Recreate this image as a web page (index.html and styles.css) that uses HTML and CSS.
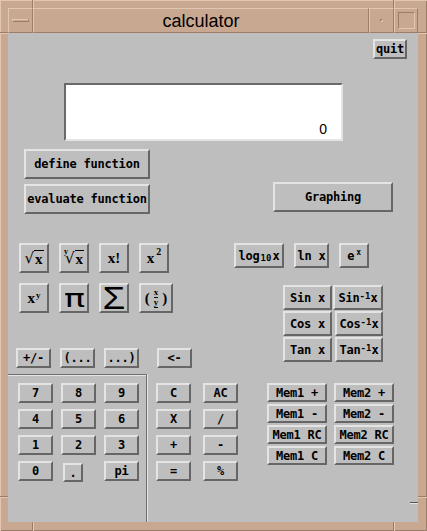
FILE: index.html
```html
<!DOCTYPE html>
<html lang="en">
<head>
    <meta charset="UTF-8">
    <title>calculator</title>
    <link rel="stylesheet" href="styles.css">
</head>
<body>
    <div class="window">
        <div class="titlebar">
            <div class="tb-box tb-menu"><span class="menu-bar"></span></div>
            <div class="tb-box tb-title">calculator</div>
            <div class="tb-box tb-min"><span class="min-dot"></span></div>
            <div class="tb-box tb-max"><span class="max-square"></span></div>
        </div>

        <div class="content">
            <div class="top-row">
                <button class="btn quit">quit</button>
            </div>

            <div class="display">0</div>

            <div class="fn-row">
                <div class="fn-col">
                    <button class="btn wide">define function</button>
                    <button class="btn wide">evaluate function</button>
                </div>
                <button class="btn graph">Graphing</button>
            </div>

            <div class="middle">
                <div class="middle-left">
                    <div class="math-grid">
                        <button class="btn sq serif"><span class="rad">√</span><span class="rad-x">x</span></button>
                        <button class="btn sq serif"><span class="idx">y</span><span class="rad">√</span><span class="rad-x">x</span></button>
                        <button class="btn sq serif">x!</button>
                        <button class="btn sq serif">x<span class="sup-high">2</span></button>
                        <button class="btn sq serif">x<span class="sup-y">y</span></button>
                        <button class="btn sq"><span class="pi">π</span></button>
                        <button class="btn sq"><span class="sigma">Σ</span></button>
                        <button class="btn sq sq-wide serif">(<span class="stack"><span class="stack-x">x</span><span class="stack-y">y</span></span>)</button>
                    </div>
                    <div class="paren-row">
                        <button class="btn small">+/-</button>
                        <button class="btn small">(...</button>
                        <button class="btn small">...)</button>
                        <button class="btn small back">&lt;-</button>
                    </div>
                </div>

                <div class="middle-right">
                    <div class="log-row">
                        <button class="btn log">log<span class="sub">10</span>x</button>
                        <button class="btn ln">ln x</button>
                        <button class="btn exp">e<span class="sup-x">x</span></button>
                    </div>
                    <div class="trig">
                        <button class="btn trig-btn">Sin x</button>
                        <button class="btn trig-btn">Sin<span class="sup-inv">-1</span>x</button>
                        <button class="btn trig-btn">Cos x</button>
                        <button class="btn trig-btn shift">Cos<span class="sup-inv">-1</span>x</button>
                        <button class="btn trig-btn">Tan x</button>
                        <button class="btn trig-btn shift">Tan<span class="sup-inv">-1</span>x</button>
                    </div>
                </div>
            </div>

            <div class="lower">
                <div class="keypad">
                    <div class="digits">
                        <button class="btn key">7</button>
                        <button class="btn key">8</button>
                        <button class="btn key">9</button>
                        <button class="btn key">4</button>
                        <button class="btn key">5</button>
                        <button class="btn key">6</button>
                        <button class="btn key">1</button>
                        <button class="btn key">2</button>
                        <button class="btn key">3</button>
                        <button class="btn key">0</button>
                        <button class="btn dot">.</button>
                        <button class="btn key">pi</button>
                    </div>
                </div>

                <div class="ops">
                    <button class="btn key">C</button>
                    <button class="btn key">AC</button>
                    <button class="btn key">X</button>
                    <button class="btn key">/</button>
                    <button class="btn key">+</button>
                    <button class="btn key">-</button>
                    <button class="btn key">=</button>
                    <button class="btn key">%</button>
                </div>

                <div class="memory">
                    <button class="btn mem">Mem1 +</button>
                    <button class="btn mem">Mem2 +</button>
                    <button class="btn mem">Mem1 -</button>
                    <button class="btn mem">Mem2 -</button>
                    <button class="btn mem">Mem1 RC</button>
                    <button class="btn mem">Mem2 RC</button>
                    <button class="btn mem">Mem1 C</button>
                    <button class="btn mem">Mem2 C</button>
                </div>
            </div>

            <span class="tick"></span>
        </div>

        <!-- frame grooves -->
        <span class="groove-v g-tl"></span>
        <span class="groove-v g-tr"></span>
        <span class="groove-v g-bl"></span>
        <span class="groove-v g-br"></span>
        <span class="groove-h g-lt"></span>
        <span class="groove-h g-rt"></span>
        <span class="groove-h g-lb"></span>
        <span class="groove-h g-rb"></span>
    </div>
</body>
</html>
```

FILE: styles.css
```css
* {
    box-sizing: border-box;
}

body {
    margin: 0;
    background-color: #c9a891;
}

.window {
    position: relative;
    width: 427px;
    height: 531px;
    padding: 8px 9px 9px 8px;
    display: flex;
    flex-direction: column;
    background-color: #c9a891;
    box-shadow: inset 1px 1px #e2c6b1, inset -1px -1px #9c7d67;
}

/* title bar */
.titlebar {
    display: flex;
    height: 25px;
}

.tb-box {
    display: flex;
    align-items: center;
    justify-content: center;
    border: 1px solid;
    border-color: #e2c6b1 #9c7d67 #9c7d67 #e2c6b1;
}

.tb-menu {
    width: 25px;
}

.tb-title {
    flex: 1;
    font-family: "Liberation Sans", Arial, sans-serif;
    font-size: 18px;
    color: #000;
    padding-top: 1px;
}

.tb-min {
    width: 25px;
}

.tb-max {
    width: 24px;
}

.menu-bar {
    width: 17px;
    height: 3px;
    border-top: 1px solid #e2c6b1;
    border-bottom: 1px solid #9c7d67;
    border-left: 1px solid #e2c6b1;
    border-right: 1px solid #9c7d67;
}

.min-dot {
    width: 3px;
    height: 3px;
    border-top: 1px solid #9c7d67;
    border-left: 1px solid #9c7d67;
    border-right: 1px solid #e2c6b1;
    border-bottom: 1px solid #e2c6b1;
}

.max-square {
    width: 17px;
    height: 17px;
    border: 1px solid;
    border-color: #9c7d67 #e2c6b1 #e2c6b1 #9c7d67;
}

/* frame grooves */
.groove-v {
    position: absolute;
    width: 2px;
    border-left: 1px solid #9c7d67;
    border-right: 1px solid #e2c6b1;
}

.groove-h {
    position: absolute;
    height: 2px;
    border-top: 1px solid #9c7d67;
    border-bottom: 1px solid #e2c6b1;
}

.g-tl { left: 32px; top: 0; height: 8px; }
.g-tr { left: 393px; top: 0; height: 8px; }
.g-bl { left: 32px; bottom: 0; height: 9px; }
.g-br { left: 393px; bottom: 0; height: 9px; }
.g-lt { left: 0; top: 32px; width: 8px; }
.g-rt { right: 0; top: 32px; width: 9px; }
.g-lb { left: 0; top: 496px; width: 8px; }
.g-rb { right: 0; top: 496px; width: 9px; }

/* main area */
.content {
    position: relative;
    flex: 1;
    display: flex;
    flex-direction: column;
    background-color: #bebebe;
}

.btn {
    display: inline-flex;
    align-items: center;
    justify-content: center;
    padding: 0;
    margin: 0;
    background-color: #bebebe;
    color: #000;
    border: 2px solid;
    border-color: #e4e4e4 #666 #666 #e4e4e4;
    font-family: "DejaVu Sans Mono", monospace;
    font-weight: bold;
    font-size: 12px;
    letter-spacing: -0.2px;
    white-space: pre;
    line-height: 1;
}

.top-row {
    display: flex;
    justify-content: flex-end;
    padding: 6px 11px 0 0;
}

.quit {
    width: 34px;
    height: 20px;
}

.display {
    width: 279px;
    height: 58px;
    margin: 24px 0 0 56px;
    display: flex;
    align-items: flex-end;
    justify-content: flex-end;
    padding: 0 14px 3px 0;
    background-color: #fff;
    border: 2px solid;
    border-color: #6a6a6a #e4e4e4 #e4e4e4 #6a6a6a;
    font-family: "Liberation Sans", Arial, sans-serif;
    font-size: 14px;
    line-height: 14px;
}

.fn-row {
    display: flex;
    align-items: flex-start;
    margin-top: 8px;
    padding-left: 16px;
}

.fn-col {
    display: flex;
    flex-direction: column;
    gap: 5px;
}

.wide {
    width: 126px;
    height: 30px;
}

.graph {
    width: 120px;
    height: 30px;
    margin: 33px 0 0 123px;
}

.middle {
    display: flex;
    margin-top: 29px;
    padding-left: 8px;
}

.middle-left {
    width: 218px;
}

.math-grid {
    display: grid;
    grid-template-columns: 30px 30px 30px 34px;
    gap: 10px;
    padding-left: 3px;
}

.sq {
    width: 30px;
    height: 30px;
}

.sq-wide {
    width: 34px;
}

.serif {
    font-family: "Liberation Serif", "Times New Roman", serif;
    font-size: 15px;
    letter-spacing: 0;
}

.rad {
    font-family: "DejaVu Sans", sans-serif;
    font-weight: normal;
    font-size: 15px;
}

.rad-x {
    border-top: 1px solid #000;
    padding: 1px 1px 0 1px;
}

.idx {
    font-size: 8px;
    align-self: flex-start;
    margin: 3px -3px 0 0;
}

.sup-high {
    font-size: 10px;
    align-self: flex-start;
    margin: 2px 0 0 2px;
}

.sup-y {
    font-size: 9px;
    align-self: flex-start;
    margin: 6px 0 0 1px;
}

.pi {
    font-family: "DejaVu Sans", sans-serif;
    font-weight: normal;
    font-size: 25px;
    transform: scaleX(1.4);
}

.sigma {
    font-family: "Liberation Sans", Arial, sans-serif;
    font-weight: normal;
    font-size: 32px;
    transform: scaleX(1.15);
}

.stack {
    display: inline-flex;
    flex-direction: column;
    align-items: center;
    font-size: 9px;
    line-height: 9px;
    margin: 0 4px;
}

.stack-x {
    border-bottom: 1px solid #000;
}

.stack-y {
    border-bottom: 1px solid #000;
}

.paren-row {
    display: flex;
    gap: 9px;
    margin-top: 35px;
}

.small {
    width: 35px;
    height: 20px;
}

.back {
    margin-left: 9px;
}

.middle-right {
    display: flex;
    flex-direction: column;
}

.log-row {
    display: flex;
    gap: 10px;
}

.log {
    width: 50px;
    height: 25px;
}

.ln {
    width: 35px;
    height: 25px;
}

.exp {
    width: 30px;
    height: 25px;
}

.sub {
    font-size: 9px;
    align-self: flex-end;
    margin: 0 1px 3px 1px;
    letter-spacing: 0;
}

.sup-x {
    font-size: 8px;
    align-self: flex-start;
    margin: 4px 0 0 2px;
}

.sup-inv {
    font-size: 9px;
    align-self: flex-start;
    margin: 5px 0 0 0;
    letter-spacing: 0;
}

.trig {
    display: grid;
    grid-template-columns: 49px 50px;
    grid-auto-rows: 25px;
    gap: 1px;
    margin: 17px 0 0 49px;
}

.trig-btn {
    width: 100%;
    height: 25px;
}

.shift {
    width: 48px;
    margin-left: 2px;
}

.lower {
    flex: 1;
    display: flex;
    align-items: flex-start;
    margin-top: 6px;
}

.keypad {
    align-self: stretch;
    width: 139px;
    padding: 8px 0 0 10px;
    border-top: 1px solid #6e6e6e;
    border-right: 1px solid #6e6e6e;
    box-shadow: 1px 0 #e4e4e4, inset 0 1px #e4e4e4;
}

.digits {
    display: grid;
    grid-template-columns: 35px 35px 35px;
    grid-auto-rows: 20px;
    column-gap: 8px;
    row-gap: 6px;
}

.key {
    width: 35px;
    height: 20px;
}

.dot {
    width: 20px;
    height: 19px;
    margin: 2px 0 0 2px;
}

.ops {
    display: grid;
    grid-template-columns: 35px 35px;
    grid-auto-rows: 20px;
    column-gap: 12px;
    row-gap: 6px;
    margin: 9px 0 0 9px;
}

.memory {
    display: grid;
    grid-template-columns: 60px 60px;
    grid-auto-rows: 19px;
    column-gap: 7px;
    row-gap: 2px;
    margin: 9px 0 0 29px;
}

.mem {
    width: 60px;
    height: 19px;
}

.tick {
    position: absolute;
    right: 0;
    top: 469px;
    width: 8px;
    height: 2px;
    border-top: 1px solid #555;
    border-bottom: 1px solid #e4e4e4;
}
```
